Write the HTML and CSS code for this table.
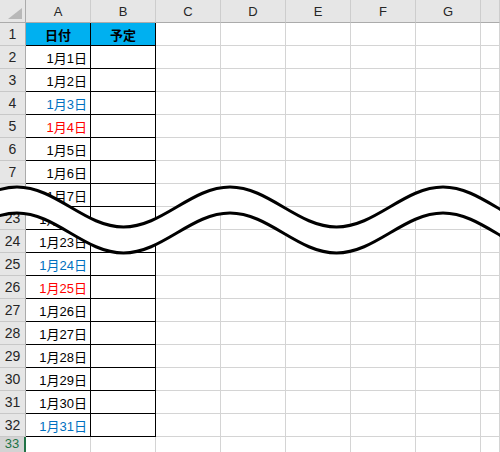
FILE: index.html
```html
<!DOCTYPE html>
<html lang="ja">
<head>
<meta charset="utf-8">
<title>Sheet</title>
<link rel="stylesheet" href="styles.css">
</head>
<body>
<div class="sheet">
  <div class="row colhead">
    <div class="corner"><span class="tri"></span></div>
    <div class="ch">A</div><div class="ch">B</div><div class="ch">C</div><div class="ch">D</div><div class="ch">E</div><div class="ch">F</div><div class="ch">G</div><div class="ch last"></div>
  </div>
  <div class="row"><div class="rh">1</div><div class="c t hd">日付</div><div class="c t hd">予定</div><div class="c"></div><div class="c"></div><div class="c"></div><div class="c"></div><div class="c"></div><div class="c"></div></div>
  <div class="row"><div class="rh">2</div><div class="c t d">1月1日</div><div class="c t"></div><div class="c"></div><div class="c"></div><div class="c"></div><div class="c"></div><div class="c"></div><div class="c"></div></div>
  <div class="row"><div class="rh">3</div><div class="c t d">1月2日</div><div class="c t"></div><div class="c"></div><div class="c"></div><div class="c"></div><div class="c"></div><div class="c"></div><div class="c"></div></div>
  <div class="row"><div class="rh">4</div><div class="c t d sat">1月3日</div><div class="c t"></div><div class="c"></div><div class="c"></div><div class="c"></div><div class="c"></div><div class="c"></div><div class="c"></div></div>
  <div class="row"><div class="rh">5</div><div class="c t d sun">1月4日</div><div class="c t"></div><div class="c"></div><div class="c"></div><div class="c"></div><div class="c"></div><div class="c"></div><div class="c"></div></div>
  <div class="row"><div class="rh">6</div><div class="c t d">1月5日</div><div class="c t"></div><div class="c"></div><div class="c"></div><div class="c"></div><div class="c"></div><div class="c"></div><div class="c"></div></div>
  <div class="row"><div class="rh">7</div><div class="c t d">1月6日</div><div class="c t"></div><div class="c"></div><div class="c"></div><div class="c"></div><div class="c"></div><div class="c"></div><div class="c"></div></div>
  <div class="row"><div class="rh">8</div><div class="c t d">1月7日</div><div class="c t"></div><div class="c"></div><div class="c"></div><div class="c"></div><div class="c"></div><div class="c"></div><div class="c"></div></div>
  <div class="row"><div class="rh">23</div><div class="c t d">1月22日</div><div class="c t"></div><div class="c"></div><div class="c"></div><div class="c"></div><div class="c"></div><div class="c"></div><div class="c"></div></div>
  <div class="row"><div class="rh">24</div><div class="c t d">1月23日</div><div class="c t"></div><div class="c"></div><div class="c"></div><div class="c"></div><div class="c"></div><div class="c"></div><div class="c"></div></div>
  <div class="row"><div class="rh">25</div><div class="c t d sat">1月24日</div><div class="c t"></div><div class="c"></div><div class="c"></div><div class="c"></div><div class="c"></div><div class="c"></div><div class="c"></div></div>
  <div class="row"><div class="rh">26</div><div class="c t d sun">1月25日</div><div class="c t"></div><div class="c"></div><div class="c"></div><div class="c"></div><div class="c"></div><div class="c"></div><div class="c"></div></div>
  <div class="row"><div class="rh">27</div><div class="c t d">1月26日</div><div class="c t"></div><div class="c"></div><div class="c"></div><div class="c"></div><div class="c"></div><div class="c"></div><div class="c"></div></div>
  <div class="row"><div class="rh">28</div><div class="c t d">1月27日</div><div class="c t"></div><div class="c"></div><div class="c"></div><div class="c"></div><div class="c"></div><div class="c"></div><div class="c"></div></div>
  <div class="row"><div class="rh">29</div><div class="c t d">1月28日</div><div class="c t"></div><div class="c"></div><div class="c"></div><div class="c"></div><div class="c"></div><div class="c"></div><div class="c"></div></div>
  <div class="row"><div class="rh">30</div><div class="c t d">1月29日</div><div class="c t"></div><div class="c"></div><div class="c"></div><div class="c"></div><div class="c"></div><div class="c"></div><div class="c"></div></div>
  <div class="row"><div class="rh">31</div><div class="c t d">1月30日</div><div class="c t"></div><div class="c"></div><div class="c"></div><div class="c"></div><div class="c"></div><div class="c"></div><div class="c"></div></div>
  <div class="row"><div class="rh">32</div><div class="c t d sat">1月31日</div><div class="c t"></div><div class="c"></div><div class="c"></div><div class="c"></div><div class="c"></div><div class="c"></div><div class="c"></div></div>
  <div class="row"><div class="rh sel">33</div><div class="c"></div><div class="c"></div><div class="c"></div><div class="c"></div><div class="c"></div><div class="c"></div><div class="c"></div><div class="c"></div></div>

  <svg class="wave" width="500" height="452" viewBox="0 0 500 452" aria-hidden="true">
    <path class="band" d="M -89.5 227 C -50.7 227 -21.8 187 17 187 C 55.8 187 84.7 227 123.5 227 C 162.3 227 191.2 187 230 187 C 268.8 187 297.7 227 336.5 227 C 375.3 227 404.2 187 443 187 C 481.8 187 510.7 227 549.5 227 L 549.5 253 C 510.7 253 481.8 213 443 213 C 404.2 213 375.3 253 336.5 253 C 297.7 253 268.8 213 230 213 C 191.2 213 162.3 253 123.5 253 C 84.7 253 55.8 213 17 213 C -21.8 213 -50.7 253 -89.5 253 Z"/>
    <path class="line" d="M -89.5 227 C -50.7 227 -21.8 187 17 187 C 55.8 187 84.7 227 123.5 227 C 162.3 227 191.2 187 230 187 C 268.8 187 297.7 227 336.5 227 C 375.3 227 404.2 187 443 187 C 481.8 187 510.7 227 549.5 227"/>
    <path class="line" d="M -89.5 253 C -50.7 253 -21.8 213 17 213 C 55.8 213 84.7 253 123.5 253 C 162.3 253 191.2 213 230 213 C 268.8 213 297.7 253 336.5 253 C 375.3 253 404.2 213 443 213 C 481.8 213 510.7 253 549.5 253"/>
  </svg>
</div>
</body>
</html>
```

FILE: styles.css
```css
html, body {
  margin: 0;
  padding: 0;
  background: #ffffff;
}
body {
  width: 500px;
  height: 452px;
  overflow: hidden;
  font-family: "Liberation Sans", "Noto Sans CJK JP", sans-serif;
  font-size: 13px;
  color: #000;
}
.sheet {
  position: relative;
  width: 500px;
  height: 452px;
  overflow: hidden;
}
.row {
  display: grid;
  grid-template-columns: 26px repeat(7, 65px) 1fr;
  height: 23px;
}
.row > div {
  box-sizing: border-box;
  height: 23px;
}
.colhead > div {
  background: #e6e6e6;
  border-right: 1px solid #cdcdcd;
  border-bottom: 1px solid #ababab;
  display: flex;
  align-items: center;
  justify-content: center;
  color: #262626;
  font-size: 13px;
  padding-top: 1px;
}
.colhead .corner {
  position: relative;
  border-right: 1px solid #ababab;
}
.tri {
  position: absolute;
  right: 3px;
  bottom: 3px;
  width: 0;
  height: 0;
  border-left: 14px solid transparent;
  border-bottom: 11px solid #b8b8b8;
}
.rh {
  background: #e6e6e6;
  border-right: 1px solid #ababab;
  border-bottom: 1px solid #c8c8c8;
  display: flex;
  align-items: center;
  justify-content: center;
  color: #262626;
  font-size: 14px;
}
.rh.sel {
  background: #d3d3d3;
  color: #217346;
  border-right: 2px solid #217346;
  align-items: flex-start;
  padding-top: 0;
  font-size: 13px;
  line-height: 14px;
}
.c {
  border-right: 1px solid #d4d4d4;
  border-bottom: 1px solid #d4d4d4;
  display: flex;
  align-items: center;
  white-space: nowrap;
  overflow: hidden;
}
.c.t {
  border-right-color: #000;
  border-bottom-color: #000;
}
.c.hd {
  background: #00b0f0;
  justify-content: center;
  font-weight: bold;
  font-size: 13px;
}
.c.d {
  justify-content: flex-end;
  padding-right: 3px;
  font-size: 13px;
}
.c.sat {
  color: #0070c0;
}
.c.sun {
  color: #ff0000;
}
.wave {
  position: absolute;
  left: 0;
  top: 0;
  pointer-events: none;
}
.wave .band {
  fill: #ffffff;
  stroke: none;
}
.wave .line {
  fill: none;
  stroke: #000;
  stroke-width: 3;
}
```
